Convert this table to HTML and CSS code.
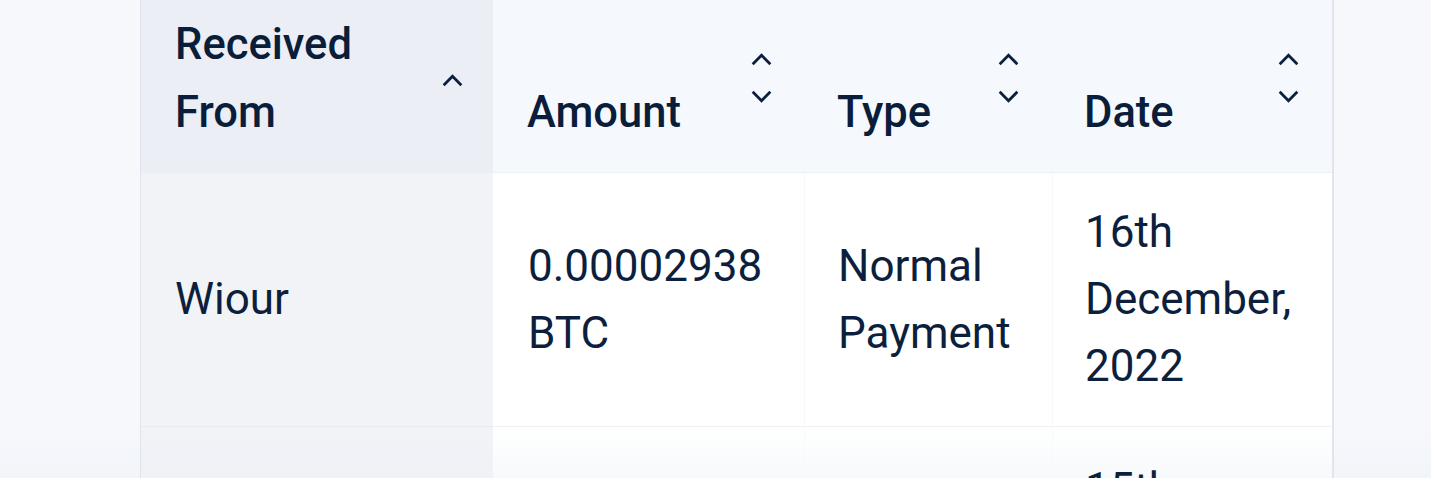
FILE: index.html
```html
<!DOCTYPE html>
<html lang="en">
<head>
<meta charset="utf-8">
<title>Transactions</title>
<link rel="stylesheet" href="styles.css">
</head>
<body>
<div class="page">
  <div class="table" role="table">
    <div class="th th-first" role="columnheader">
      <span class="label label-wrap">Received From</span>
      <span class="sort sort-single">
        <svg class="chev" viewBox="0 0 24 14" aria-hidden="true"><polyline points="2.5,12 12,2.5 21.5,12"/></svg>
      </span>
    </div>
    <div class="th" role="columnheader">
      <span class="label">Amount</span>
      <span class="sort">
        <svg class="chev" viewBox="0 0 24 14" aria-hidden="true"><polyline points="2.5,12 12,2.5 21.5,12"/></svg>
        <svg class="chev" viewBox="0 0 24 14" aria-hidden="true"><polyline points="2.5,2 12,11.5 21.5,2"/></svg>
      </span>
    </div>
    <div class="th th-type" role="columnheader">
      <span class="label">Type</span>
      <span class="sort">
        <svg class="chev" viewBox="0 0 24 14" aria-hidden="true"><polyline points="2.5,12 12,2.5 21.5,12"/></svg>
        <svg class="chev" viewBox="0 0 24 14" aria-hidden="true"><polyline points="2.5,2 12,11.5 21.5,2"/></svg>
      </span>
    </div>
    <div class="th th-date" role="columnheader">
      <span class="label">Date</span>
      <span class="sort">
        <svg class="chev" viewBox="0 0 24 14" aria-hidden="true"><polyline points="2.5,12 12,2.5 21.5,12"/></svg>
        <svg class="chev" viewBox="0 0 24 14" aria-hidden="true"><polyline points="2.5,2 12,11.5 21.5,2"/></svg>
      </span>
    </div>

    <div class="td td-first" role="cell">Wiour</div>
    <div class="td td-amount" role="cell">0.00002938 BTC</div>
    <div class="td td-type" role="cell">Normal Payment</div>
    <div class="td td-date" role="cell">16th December, 2022</div>

    <div class="td td-first row-last" role="cell">Wiour</div>
    <div class="td td-amount row-last" role="cell">0.00001520 BTC</div>
    <div class="td td-type row-last" role="cell">Normal Payment</div>
    <div class="td td-date row-last" role="cell">15th December, 2022</div>
  </div>
</div>
</body>
</html>
```

FILE: styles.css
```css
* { box-sizing: border-box; }

html, body {
  margin: 0;
  padding: 0;
  overflow: hidden;
}

body {
  font-family: Roboto, "Noto Sans", "Liberation Sans", sans-serif;
  color: #0c1f3d;
  height: 478px;
  background: linear-gradient(to bottom, #f6f8fc 0, #f6f8fc 430px, #f1f4f9 478px);
}

.page {
  padding-left: 140px;
  height: 478px;
}

.table {
  display: grid;
  grid-template-columns: 352px 311px 248px 280px;
  width: 1194px;
  border-left: 1px solid #dfe3ea;
  border-right: 2px solid #e0e5ed;
  background: #ffffff;
}

.th {
  display: flex;
  justify-content: space-between;
  align-items: flex-end;
  gap: 10px;
  padding: 11px 31px 25px 34px;
  background: #f5f8fd;
  border-bottom: 1px solid #eceff4;
  font-size: 43.5px;
  font-weight: 500;
  line-height: 68px;
  color: #0a1d3b;
}

.th-first {
  background: #ebeef4;
  padding-right: 29px;
}

.th-type { padding-left: 33px; padding-right: 32px; }
.th-date { padding-left: 32px; padding-right: 32px; }

.label-wrap { max-width: 220px; }

.sort {
  align-self: center;
  display: flex;
  flex-direction: column;
  gap: 24px;
  margin-bottom: 2px;
}

.sort-single { margin-bottom: -2px; }

.chev {
  display: block;
  width: 23px;
  height: 13px;
  fill: none;
  stroke: #0c1f3d;
  stroke-width: 3;
  stroke-linecap: butt;
  stroke-linejoin: miter;
}

.td {
  display: flex;
  align-items: center;
  padding: 26px 30px 26px 34px;
  min-height: 254px;
  font-size: 44px;
  font-weight: 400;
  line-height: 67px;
  background: #ffffff;
  border-bottom: 1px solid #eef1f6;
}

.td-first { background: #f1f3f7; border-bottom-color: #e8ecf2; }
.td-amount { padding-left: 35px; }
.td-type { padding-left: 33px; border-left: 1px solid #f8f9fb; }
.td-date { padding-left: 32px; padding-right: 20px; border-left: 1px solid #f8f9fb; }

.row-last {
  padding-top: 29px;
  background: linear-gradient(to bottom, #ffffff 0, #fcfdfe 20px, #f5f8fb 60px);
}

.row-last.td-first {
  background: linear-gradient(to bottom, #f1f3f7 0, #eef1f6 60px);
}
```
